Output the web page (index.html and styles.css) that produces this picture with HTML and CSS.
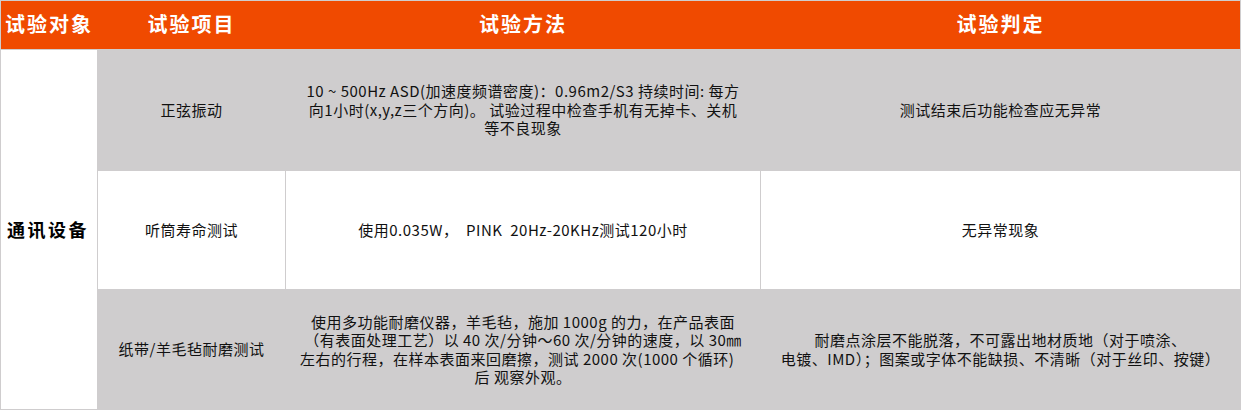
FILE: index.html
```html
<!DOCTYPE html>
<html lang="zh-CN">
<head>
<meta charset="utf-8">
<title>试验表</title>
<link rel="stylesheet" href="styles.css">
</head>
<body>
<div class="table">
  <div class="head">
    <div class="hcell">试验对象</div>
    <div class="hcell">试验项目</div>
    <div class="hcell">试验方法</div>
    <div class="hcell">试验判定</div>
  </div>
  <div class="cell subject">通讯设备</div>

  <div class="cell gray">正弦振动</div>
  <div class="cell gray">10 ~ 500Hz ASD(加速度频谱密度)：0.96m2/S3 持续时间: 每方<br>向1小时(x,y,z三个方向)。 试验过程中检查手机有无掉卡、关机<br>等不良现象</div>
  <div class="cell gray">测试结束后功能检查应无异常</div>

  <div class="cell white">听筒寿命测试</div>
  <div class="cell white pre">使用0.035W，  PINK  20Hz-20KHz测试120小时</div>
  <div class="cell white">无异常现象</div>

  <div class="cell gray">纸带/羊毛毡耐磨测试</div>
  <div class="cell gray pre">使用多功能耐磨仪器，羊毛毡，施加 1000g 的力，在产品表面
（有表面处理工艺）以 40 次/分钟～60 次/分钟的速度，以 30㎜
左右的行程，在样本表面来回磨擦，测试 2000 次(1000 个循环)   
后 观察外观。</div>
  <div class="cell gray">耐磨点涂层不能脱落，不可露出地材质地（对于喷涂、<br>电镀、IMD）；图案或字体不能缺损、不清晰（对于丝印、按键）</div>
</div>
</body>
</html>
```

FILE: styles.css
```css
html, body {
  margin: 0;
  padding: 0;
  background: #ffffff;
}

.table {
  width: 1241px;
  height: 410px;
  box-sizing: border-box;
  border: 1px solid #cfcdce;
  background: #cfcdce;
  display: grid;
  grid-template-columns: 96px 187px 474px 479px;
  grid-template-rows: 48px 120px 118px 119px;
  gap: 1px;
  font-family: "Noto Sans CJK SC", "Noto Sans", sans-serif;
}

.head {
  grid-column: 1 / 5;
  display: grid;
  grid-template-columns: 96px 187px 474px 479px;
  column-gap: 1px;
  background: #f04a00;
}

.hcell {
  display: flex;
  align-items: center;
  justify-content: center;
  color: #ffffff;
  font-weight: 700;
  font-size: 20px;
  letter-spacing: 2px;
  line-height: 24px;
  white-space: nowrap;
  padding-bottom: 2px;
}

.cell {
  display: flex;
  align-items: center;
  justify-content: center;
  text-align: center;
  font-size: 15px;
  letter-spacing: 0.5px;
  line-height: 18.4px;
  color: #111111;
}

.pre {
  white-space: pre;
}

.subject {
  grid-column: 1;
  grid-row: 2 / 5;
  background: #ffffff;
  font-weight: 700;
  font-size: 18px;
  letter-spacing: 2.5px;
  color: #000000;
  padding-right: 2px;
}

.gray {
  background: #cfcdce;
}

.white {
  background: #ffffff;
}
```
